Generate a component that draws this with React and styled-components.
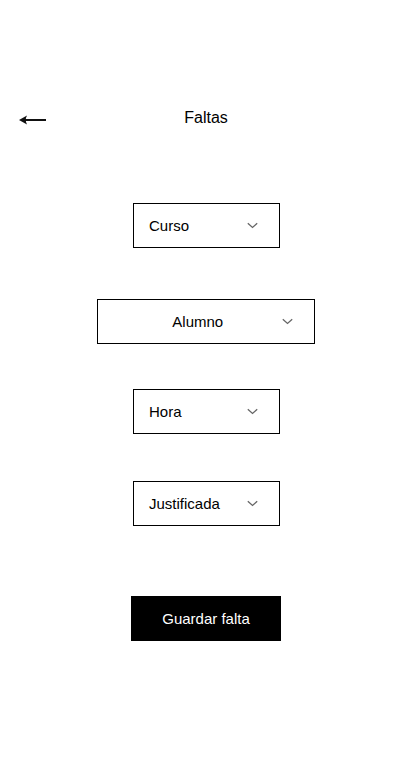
import styled, { createGlobalStyle } from 'styled-components';

const GlobalStyle = createGlobalStyle`
  body {
    margin: 0;
    background: #fff;
    font-family: Arial, 'Liberation Sans', sans-serif;
    color: #000;
  }
`;

const Chevron = () => (
  <svg width="11" height="7" viewBox="0 0 11 7" fill="none">
    <path d="M0.8 1.2 L5.5 5.4 L10.2 1.2" stroke="#666" strokeWidth="1.3" />
  </svg>
);

const BackArrow = () => (
  <svg width="28" height="12" viewBox="0 0 28 12">
    <path d="M6 6 H27" stroke="#111" strokeWidth="2" />
    <path d="M0 6 L8 1.5 Q5.5 6 8 10.5 Z" fill="#111" />
  </svg>
);

// select de mentira, el nativo no se ve igual
const Dropdown = ({ label, width, center, mt }) => (
  <SelectBox $width={width} $mt={mt}>
    <SelectLabel $center={center}>{label}</SelectLabel>
    <Chevron />
  </SelectBox>
);

export default function App() {
  return (
    <Page>
      <GlobalStyle />
      <Header>
        <BackButton>
          <BackArrow />
        </BackButton>
        <Title>Faltas</Title>
        <span />
      </Header>
      <Form>
        <Dropdown label="Curso" width={147} mt={0} />
        <Dropdown label="Alumno" width={218} mt={51} center />
        <Dropdown label="Hora" width={147} mt={45} />
        <Dropdown label="Justificada" width={147} mt={47} />
        <SaveButton>Guardar falta</SaveButton>
      </Form>
    </Page>
  );
}

const Page = styled.div`
  width: 412px;
  min-height: 778px;
  padding-top: 103px;
  box-sizing: border-box;
`;

const Header = styled.div`
  display: grid;
  grid-template-columns: 1fr auto 1fr;
  align-items: center;
  height: 30px;
`;

const BackButton = styled.div`
  display: flex;
  align-items: center;
  padding-left: 19px;
  padding-top: 4px;
`;

const Title = styled.h1`
  margin: 0;
  font-size: 16px;
  font-weight: normal;
`;

const Form = styled.div`
  display: flex;
  flex-direction: column;
  align-items: center;
  margin-top: 70px;
`;

const SelectBox = styled.div`
  width: ${(p) => p.$width}px;
  height: 45px;
  margin-top: ${(p) => p.$mt}px;
  box-sizing: border-box;
  border: 1px solid #000;
  display: flex;
  align-items: center;
  padding: 0 21px 0 15.5px;
`;

const SelectLabel = styled.span`
  flex: 1;
  font-size: 15px;
  text-align: ${(p) => (p.$center ? 'center' : 'left')};
`;

const SaveButton = styled.button`
  margin-top: 70px;
  width: 150px;
  height: 45px;
  border: none;
  background: #000;
  color: #fff;
  font-family: Arial, 'Liberation Sans', sans-serif;
  font-size: 15px;
  padding: 0;
`;
